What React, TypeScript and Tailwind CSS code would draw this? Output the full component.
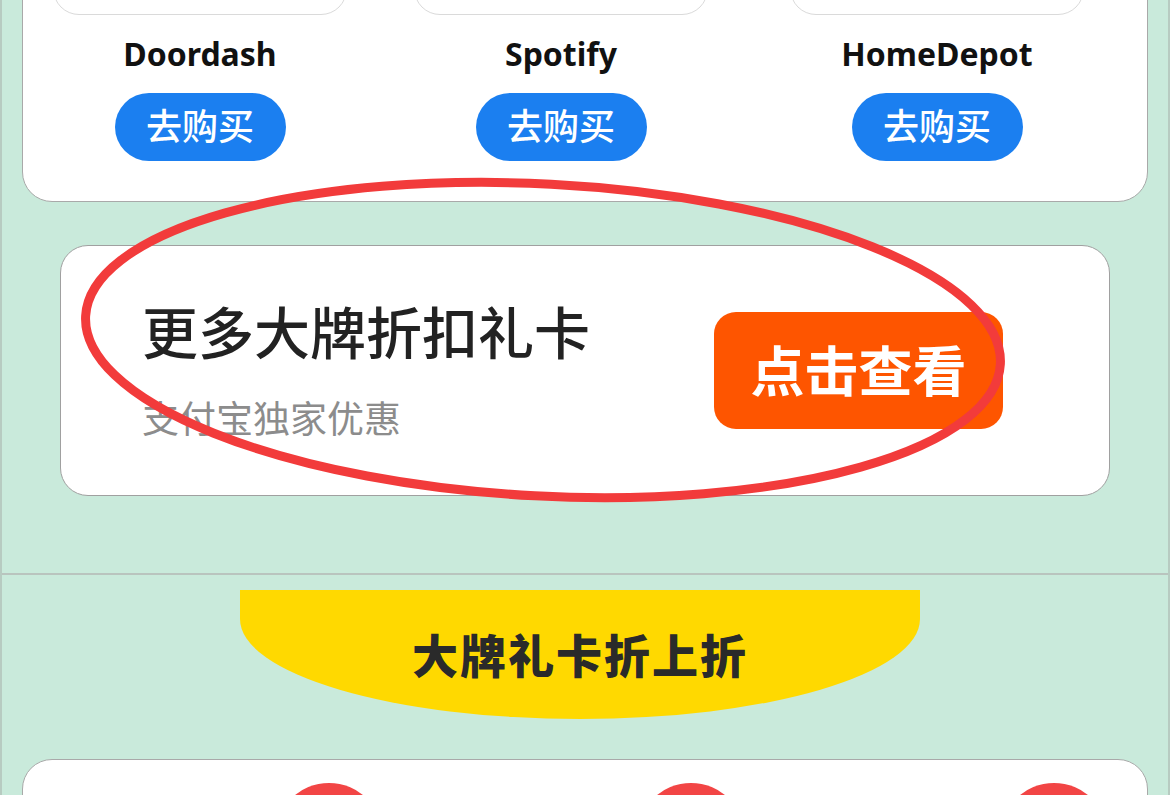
import { ReactNode } from 'react';

const cjk = "font-['Noto_Sans','Noto_Sans_CJK_SC',sans-serif]";

interface BrandProps {
    name: string;
    className?: string;
}

function Brand({name, className}: BrandProps) {
  return (
    <div className={`flex w-[294px] flex-shrink-0 flex-col items-center ${className ?? ''}`}>
        <div className="h-[194px] w-full rounded-[26px] border border-[#dadada] bg-white"></div>
        <div className="mt-[19px] text-[32px] font-bold leading-[40px] text-[#111]">{name}</div>
        <button className="mt-[19px] flex h-[68px] w-[171px] items-center justify-center rounded-full bg-[#1b7ff0] text-[36px] font-medium leading-none text-white">
            去购买
        </button>
    </div>
  );
}

function Section({children, className}: {children: ReactNode; className?: string}) {
  return <div className={className}>{children}</div>;
}

export default function App() {
  return (
    <div className={`relative flex h-[795px] w-[1170px] flex-col overflow-hidden border-x-2 border-[#b7cbc1] bg-[#c9eadb] ${cjk}`}>
        {/* brand card, top scrolled off screen */}
        <Section className="mx-[20px] -mt-[200px] flex flex-shrink-0 rounded-[30px] border border-[#a9a9a9] bg-white pb-[40px] pl-[30px] pt-[20px]">
            <Brand name="Doordash" />
            <Brand name="Spotify" className="ml-[67px]" />
            <Brand name="HomeDepot" className="ml-[82px]" />
        </Section>

        {/* more gift cards */}
        <Section className="mx-[58px] mt-[43px] flex h-[251px] flex-shrink-0 items-center justify-between rounded-[28px] border border-[#a0a0a0] bg-white pl-[81px] pr-[106px]">
            <div className="flex flex-col gap-[37px]">
                <div className="text-[56px] font-medium leading-[60px] text-[#222]">更多大牌折扣礼卡</div>
                <div className="text-[37px] leading-[40px] text-[#8c8c8c]">支付宝独家优惠</div>
            </div>
            <button className="flex h-[117px] w-[289px] items-center justify-center rounded-[22px] bg-[#fe5500] text-[54px] font-bold leading-none text-white">
                点击查看
            </button>
        </Section>

        <div className="mt-[77px] h-[2px] flex-shrink-0 bg-[#b9c4be]"></div>

        <div className="mt-[15px] flex flex-shrink-0 justify-center pr-[10px]">
            <div className="flex h-[129px] w-[680px] items-center justify-center rounded-b-[50%_100px] bg-[#ffd900] pt-[2px] text-[46px] font-black tracking-[2px] text-[#2a2a2a]">
                大牌礼卡折上折
            </div>
        </div>

        {/* next card, mostly below the fold */}
        <div className="mx-[20px] mt-[40px] flex h-[120px] flex-shrink-0 rounded-t-[30px] border border-[#a9a9a9] bg-white pt-[23px]">
            <div className="ml-[252px] h-[108px] w-[108px] rounded-full bg-[#f24545]"></div>
            <div className="ml-[254px] h-[108px] w-[108px] rounded-full bg-[#f24545]"></div>
            <div className="ml-[255px] h-[108px] w-[108px] rounded-full bg-[#f24545]"></div>
        </div>

        {/* hand-drawn highlight ring */}
        <svg className="pointer-events-none absolute left-0 top-0" width="1170" height="795" viewBox="0 0 1170 795">
            <ellipse cx="541" cy="340" rx="458" ry="156" transform="rotate(3 541 340)" fill="none" stroke="#f23b3b" strokeWidth="9" />
        </svg>
    </div>
  );
}
